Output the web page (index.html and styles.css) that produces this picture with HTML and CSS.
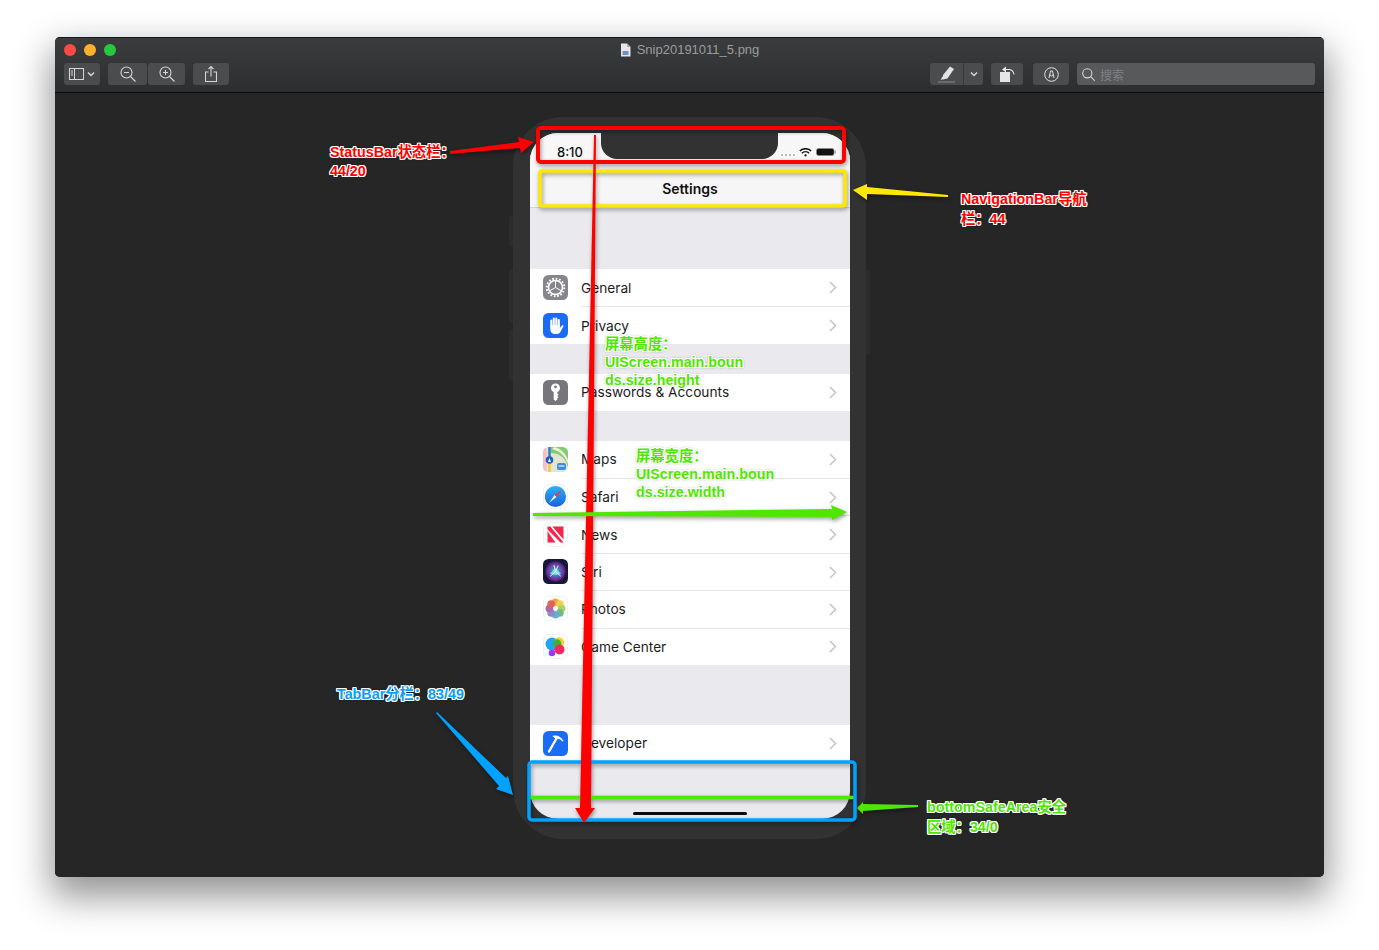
FILE: index.html
```html
<!DOCTYPE html>
<html lang="zh-CN">
<head>
  <meta charset="UTF-8">
  <title>Snip20191011_5.png</title>
  <link rel="stylesheet" href="styles.css">
</head>
<body>

<div class="window">
  <header class="header">
    <div class="titlebar">
      <div class="lights">
        <span class="light red"></span>
        <span class="light yellow"></span>
        <span class="light green"></span>
      </div>
      <div class="title">
        <svg width="11" height="14" viewBox="0 0 11 14"><path d="M1 .5h6l3.5 3.5v9.5h-9.500z" fill="#e8e8e8"/><path d="M7 .5v3.5h3.500" fill="#aaa"/><rect x="2.5" y="8" width="6" height="4" fill="#6f8fc8"/></svg>
        <span>Snip20191011_5.png</span>
      </div>
    </div>
    <div class="toolbar">
      <div class="btn btn-sidebar">
        <svg width="15" height="12" viewBox="0 0 15 12" fill="none" stroke="#d6d6d6"><rect x=".5" y=".5" width="14" height="11"/><path d="M5.5 .5v11M1.8 3h2.200M1.8 5h2.200M1.8 7h2.200"/></svg>
        <svg width="8" height="6" viewBox="0 0 8 6" fill="none" stroke="#d6d6d6" stroke-width="1.5"><path d="M1 1.5l3 3 3-3"/></svg>
      </div>
      <div class="btn-pair">
        <div class="btn btn-zoom-out">
          <svg width="16" height="16" viewBox="0 0 16 16" fill="none" stroke="#d6d6d6" stroke-width="1.1"><circle cx="6.5" cy="6.5" r="5.5"/><path d="M4 6.5h5M10.5 10.5l5 5"/></svg>
        </div>
        <div class="btn btn-zoom-in">
          <svg width="16" height="16" viewBox="0 0 16 16" fill="none" stroke="#d6d6d6" stroke-width="1.1"><circle cx="6.5" cy="6.5" r="5.5"/><path d="M4 6.5h5M6.5 4v5M10.5 10.5l5 5"/></svg>
        </div>
      </div>
      <div class="btn btn-share">
        <svg width="12" height="16" viewBox="0 0 12 16" fill="none" stroke="#d6d6d6" stroke-width="1.1"><path d="M3.5 6h-3v9.5h11v-9.500h-3M6 10.5v-10M3.5 3l2.500-2.500 2.500 2.500"/></svg>
      </div>

      <div class="btn btn-markup">
        <div class="markup-pen">
          <svg width="18" height="17" viewBox="0 0 18 17"><path d="M5 9l7-8.500 4 2.500-6.500 9.500-4.500 1z" fill="#e2e2e2"/><path d="M4.5 10.5l3 2-5 1.500z" fill="#e2e2e2"/><path d="M0 16h17" stroke="#8a8a8a" stroke-width="1"/></svg>
        </div>
        <div class="markup-more">
          <svg width="8" height="6" viewBox="0 0 8 6" fill="none" stroke="#d6d6d6" stroke-width="1.5"><path d="M1 1.5l3 3 3-3"/></svg>
        </div>
      </div>
      <div class="btn btn-rotate">
        <svg width="15" height="16" viewBox="0 0 15 16"><rect x="0" y="6" width="10" height="10" fill="#e6e6e6"/><path d="M5 3.5h3.500c3 0 5 2 5.500 5" fill="none" stroke="#e6e6e6" stroke-width="1.1"/><path d="M6 .5v6l-4-3z" fill="#e6e6e6"/></svg>
      </div>
      <div class="btn btn-annotate">
        <svg width="15" height="15" viewBox="0 0 15 15" fill="none" stroke="#e0e0e0" stroke-width="1"><circle cx="7.5" cy="7.5" r="6.8"/><path d="M5 11l1.500-7h2l1.500 7M6 7.5a1.500 1.500 0 0 0 3 0"/></svg>
      </div>
      <div class="search">
        <svg width="13" height="13" viewBox="0 0 13 13" fill="none" stroke="#d6d6d6" stroke-width="1.1"><circle cx="5.3" cy="5.3" r="4.6"/><path d="M8.7 8.7l4 4"/></svg>
        <span>搜索</span>
      </div>
    </div>
  </header>

  <main class="canvas">
    <div class="phone">
      <span class="side-btn side-a"></span>
      <span class="side-btn side-b"></span>
      <span class="side-btn side-c"></span>
      <span class="side-btn side-d"></span>

      <div class="screen">
        <div class="status">
          <div class="status-time">8:10</div>
          <div class="notch"></div>
          <div class="status-icons">
            <span class="signal"><i></i><i></i><i></i><i></i></span>
            <svg width="13" height="9" viewBox="0 0 13 9" fill="none" stroke="#111" stroke-width="1.5"><path d="M.8 3a8.200 8.200 0 0 1 11.400 0M2.900 5.200a5.200 5.200 0 0 1 7.200 0"/><circle cx="6.5" cy="7.4" r="1.1" fill="#111" stroke="none"/></svg>
            <svg width="20" height="8" viewBox="0 0 20 8"><rect x=".5" y=".5" width="17.5" height="7" rx="2" fill="#111" stroke="#888" stroke-width=".6"/><rect x="18.6" y="2.5" width="1.2" height="3" fill="#999"/></svg>
          </div>
        </div>
        <div class="navbar">Settings</div>

        <div class="group group-first">
          <div class="row">
            <svg class="app-icon" viewBox="0 0 25 25">
              <rect width="25" height="25" rx="5.5" fill="#85858a"/>
              <circle cx="12.5" cy="12.5" r="8.8" fill="none" stroke="#fff" stroke-width="2" stroke-dasharray="1.7 1.75"/>
              <circle cx="12.5" cy="12.5" r="7" fill="none" stroke="#fff" stroke-width="1.6"/>
              <path d="M12.5 12.5V6M12.5 12.5l5.600 3.200M12.5 12.5l-5.600 3.200" stroke="#fff" stroke-width="1"/>
            </svg>
            <div class="row-body"><span>General</span>
              <svg class="chevron" width="8" height="13" viewBox="0 0 8 13"><path d="M1 1l5.500 5.500-5.500 5.500"/></svg>
            </div>
          </div>
          <div class="row">
            <svg class="app-icon" viewBox="0 0 25 25">
              <rect width="25" height="25" rx="5.5" fill="#1a6cf7"/>
              <path d="M8.3 13V7.500M10.800 12V5.500M13.300 12V5.500M15.800 13V7" stroke="#fff" stroke-width="2.1" stroke-linecap="round"/>
              <path d="M7.3 12h9.600v3l2.300-3 1.500.8-3.200 6c-.8 1.500-2 2.200-3.800 2.200h-1.500c-2.800 0-4.900-2-4.900-4.800z" fill="#fff"/>
            </svg>
            <div class="row-body"><span>Privacy</span>
              <svg class="chevron" width="8" height="13" viewBox="0 0 8 13"><path d="M1 1l5.500 5.500-5.500 5.500"/></svg>
            </div>
          </div>
        </div>

        <div class="group group-keys">
          <div class="row">
            <svg class="app-icon" viewBox="0 0 25 25">
              <rect width="25" height="25" rx="5.5" fill="#77777b"/>
              <path d="M12.5 3.5a4.500 4.500 0 0 1 1.800 8.600v1.200l1.300 1.200-1.300 1.200 1.300 1.200-1.300 1.300v1.400l-1.800 1.400-1.800-1.400v-7.500a4.500 4.500 0 0 1 1.800-8.600z" fill="#fff"/>
              <circle cx="12.5" cy="6.8" r="1.4" fill="#77777b"/>
            </svg>
            <div class="row-body"><span>Passwords &amp; Accounts</span>
              <svg class="chevron" width="8" height="13" viewBox="0 0 8 13"><path d="M1 1l5.500 5.500-5.500 5.500"/></svg>
            </div>
          </div>
        </div>

        <div class="group group-apps">
          <div class="row">
            <svg class="app-icon" viewBox="0 0 25 25">
              <defs><clipPath id="maps-clip"><rect width="25" height="25" rx="5.5"/></clipPath></defs>
              <g clip-path="url(#maps-clip)">
                <rect width="25" height="25" fill="#e6e3cf"/>
                <path d="M7 0h18v20C22 10 16 6 7 6z" fill="#7fce72"/>
                <path d="M12 0c6 2 11 7 13 13v4C22 9 17 4 9 2z" fill="#f4f0d8"/>
                <rect width="3.5" height="25" fill="#f7bcc5"/>
                <path d="M6.5 0v25" stroke="#f5c93c" stroke-width="2.5"/>
                <path d="M6.5 0v11" stroke="#2a7de1" stroke-width="2.5"/>
                <circle cx="6.5" cy="13" r="3.8" fill="#1f5fc4"/>
                <path d="M6.5 11l1.500 4h-3z" fill="#fff"/>
                <rect x="14" y="16" width="9" height="7" rx="2" fill="#3f8fe0"/>
                <path d="M15.5 19h6" stroke="#fff" stroke-width="1"/>
              </g>
            </svg>
            <div class="row-body"><span>Maps</span>
              <svg class="chevron" width="8" height="13" viewBox="0 0 8 13"><path d="M1 1l5.500 5.500-5.500 5.500"/></svg>
            </div>
          </div>
          <div class="row">
            <svg class="app-icon" viewBox="0 0 25 25">
              <defs><linearGradient id="safari-blue" x1="0" y1="0" x2="0" y2="1"><stop offset="0" stop-color="#2cb2f6"/><stop offset="1" stop-color="#1d5fdc"/></linearGradient></defs>
              <rect x=".5" y=".5" width="24" height="24" rx="5.5" fill="#fff" stroke="#f1f1f3"/>
              <circle cx="12.5" cy="12.5" r="10.6" fill="url(#safari-blue)"/>
              <path d="M19 6l-7.500 5 2 2z" fill="#f0372d"/>
              <path d="M6 19l7.500-6-2-2z" fill="#f2f2f2"/>
            </svg>
            <div class="row-body"><span>Safari</span>
              <svg class="chevron" width="8" height="13" viewBox="0 0 8 13"><path d="M1 1l5.500 5.500-5.500 5.500"/></svg>
            </div>
          </div>
          <div class="row">
            <svg class="app-icon" viewBox="0 0 25 25">
              <rect x=".5" y=".5" width="24" height="24" rx="5.5" fill="#fff" stroke="#f1f1f3"/>
              <path d="M4.5 8v12.500h8.500zM9 4.500h11.500v13z" fill="#f5264c"/>
              <path d="M4.5 4.5h3l13 16h-3l-13-13z" fill="#f5264c"/>
              <path d="M7.5 4.5h1.800l11.200 13.800v1.500zM4.500 7.500v1.800l8 11.200h1.500z" fill="#fff"/>
            </svg>
            <div class="row-body"><span>News</span>
              <svg class="chevron" width="8" height="13" viewBox="0 0 8 13"><path d="M1 1l5.500 5.500-5.500 5.500"/></svg>
            </div>
          </div>
          <div class="row">
            <svg class="app-icon" viewBox="0 0 25 25">
              <defs>
                <radialGradient id="siri-orb"><stop offset="0" stop-color="#8feaf0"/><stop offset=".4" stop-color="#3f7fc0"/><stop offset=".75" stop-color="#7a2f9c"/><stop offset="1" stop-color="#25204e"/></radialGradient>
              </defs>
              <rect width="25" height="25" rx="5.5" fill="#15163a"/>
              <circle cx="12.5" cy="12.5" r="10.5" fill="url(#siri-orb)"/>
              <path d="M7 14.500c2-1.500 3-4 5.500-4s3.500 2.500 5.500 4c-2 .5-3 1.500-5.500 1.500s-3.500-1-5.500-1.500z" fill="#7fe6e8" opacity=".8"/>
              <path d="M12.5 12.5l-5 4.500M12.5 12.5l5 4.500M12.5 12.5l-1.500-6M12.5 12.5l2.500-5.500" stroke="#eef8ff" stroke-width="1" stroke-linecap="round"/>
            </svg>
            <div class="row-body"><span>Siri</span>
              <svg class="chevron" width="8" height="13" viewBox="0 0 8 13"><path d="M1 1l5.500 5.500-5.500 5.500"/></svg>
            </div>
          </div>
          <div class="row">
            <svg class="app-icon" viewBox="0 0 25 25">
              <rect x=".5" y=".5" width="24" height="24" rx="5.5" fill="#fff" stroke="#f1f1f3"/>
              <g opacity=".92">
                <circle cx="12.5" cy="6.3" r="3.8" fill="#f09a37"/>
                <circle cx="16.9" cy="8.1" r="3.8" fill="#f3cf3c"/>
                <circle cx="18.7" cy="12.5" r="3.8" fill="#a9cf54"/>
                <circle cx="16.9" cy="16.9" r="3.8" fill="#62b67a"/>
                <circle cx="12.5" cy="18.7" r="3.8" fill="#5aa7d6"/>
                <circle cx="8.1" cy="16.9" r="3.8" fill="#8a7fc0"/>
                <circle cx="6.3" cy="12.5" r="3.8" fill="#a65d9f"/>
                <circle cx="8.1" cy="8.1" r="3.8" fill="#e0534d"/>
              </g>
              <circle cx="12.5" cy="12.5" r="1" fill="#fff"/>
            </svg>
            <div class="row-body"><span>Photos</span>
              <svg class="chevron" width="8" height="13" viewBox="0 0 8 13"><path d="M1 1l5.500 5.500-5.500 5.500"/></svg>
            </div>
          </div>
          <div class="row">
            <svg class="app-icon" viewBox="0 0 25 25">
              <rect x=".5" y=".5" width="24" height="24" rx="5.5" fill="#fff" stroke="#f1f1f3"/>
              <circle cx="9" cy="10" r="6.5" fill="#1fa5f7"/>
              <circle cx="16" cy="8.5" r="5.2" fill="#f7d32e"/>
              <circle cx="14" cy="9.5" r="4.2" fill="#3fae3a"/>
              <circle cx="16.5" cy="15.5" r="5" fill="#f5285f"/>
              <circle cx="9" cy="19" r="3.3" fill="#9b3bf0"/>
            </svg>
            <div class="row-body"><span>Game Center</span>
              <svg class="chevron" width="8" height="13" viewBox="0 0 8 13"><path d="M1 1l5.500 5.500-5.500 5.500"/></svg>
            </div>
          </div>
        </div>

        <div class="group group-dev">
          <div class="row">
            <svg class="app-icon" viewBox="0 0 25 25">
              <rect width="25" height="25" rx="5.5" fill="#1a6cf7"/>
              <path d="M6 20.500l8-14" stroke="#fff" stroke-width="2.4" stroke-linecap="round"/>
              <path d="M9.5 5c4.500-1.300 8.500.5 11 5l-1 .5c-2.500-2.500-4.500-3-6.700-2.500z" fill="#fff"/>
            </svg>
            <div class="row-body"><span>Developer</span>
              <svg class="chevron" width="8" height="13" viewBox="0 0 8 13"><path d="M1 1l5.500 5.500-5.500 5.500"/></svg>
            </div>
          </div>
        </div>

        <div class="home-area"><span class="home-bar"></span></div>
      </div>
    </div>
  </main>
</div>

<!-- annotations drawn over the screenshot -->
<svg class="marks" width="1379" height="950" viewBox="0 0 1379 950">
  <g fill="none">
    <rect x="540" y="171" width="305" height="35" rx="2" stroke="#ffe800" stroke-width="3.5"/>
    <rect x="538" y="128" width="306" height="34" rx="3" stroke="#ff0000" stroke-width="4"/>
    <path d="M530 797.5H854" stroke="#4fe600" stroke-width="3.5"/>
    <rect x="529" y="762" width="326" height="58" rx="3" stroke="#00a2ff" stroke-width="3.5"/>
  </g>
  <polygon fill="#ff0000" points="594,135 596,135 591,808 595,808 584,823 575,808 580,808"/>
  <polygon fill="#4fe600" points="533,513 832,509 831,505 847,512 832,520 832,517 533,516"/>
  <polygon fill="#ff0000" points="450,151 519,142 518,137 534,142 521,153 520,148 450,154"/>
  <polygon fill="#ffe800" points="948,195 867,187 867,184 853,190 867,200 867,194 948,197"/>
  <polygon fill="#00a2ff" points="437,712 506,778 508,776 513,795 496,789 499,786 436,713"/>
  <polygon fill="#4fe600" points="918,805 863,804 863,802 857,808 863,814 863,811 918,807"/>
</svg>

<div class="note note-red note-status">StatusBar状态栏：<br>44/20</div>
<div class="note note-red note-nav">NavigationBar导航<br>栏：44</div>
<div class="note note-blue note-tab">TabBar分栏：83/49</div>
<div class="note note-green note-safe">bottomSafeArea安全<br>区域：34/0</div>
<div class="note note-green note-height">屏幕高度：<br>UIScreen.main.boun<br>ds.size.height</div>
<div class="note note-green note-width">屏幕宽度：<br>UIScreen.main.boun<br>ds.size.width</div>

</body>
</html>
```

FILE: styles.css
```css
html, body {
  margin: 0;
  height: 950px;
  overflow: hidden;
}

body {
  position: relative;
  background: #fff;
  font-family: "Liberation Sans", "Noto Sans CJK SC", sans-serif;
  padding: 37px 55px 0;
  box-sizing: border-box;
}

/* preview window */
.window {
  height: 840px;
  display: flex;
  flex-direction: column;
  border-radius: 5px;
  overflow: hidden;
  background: #262626;
  box-shadow: 0 16px 36px 4px rgba(0, 0, 0, 0.42);
}

.header {
  flex: none;
  height: 56px;
  box-sizing: border-box;
  background: linear-gradient(#3b3c3e, #2d2e30);
  border-top: 1px solid #17181a;
  border-bottom: 1px solid #0c0c0c;
}

.titlebar {
  height: 25px;
  box-sizing: border-box;
  display: grid;
  grid-template-columns: 1fr auto 1fr;
  align-items: center;
  padding: 0 9px 2px;
}

.lights {
  display: flex;
  gap: 8px;
}

.light {
  width: 12px;
  height: 12px;
  border-radius: 50%;
}

.light.red { background: #fc4a46; }
.light.yellow { background: #fdb22a; }
.light.green { background: #28c83e; }

.title {
  grid-column: 2;
  display: flex;
  align-items: center;
  gap: 6px;
  color: #9c9c9c;
  font-size: 13px;
}

.toolbar {
  height: 22px;
  display: flex;
  align-items: stretch;
  gap: 8px;
  padding: 0 9px;
}

.btn {
  display: flex;
  align-items: center;
  justify-content: center;
  background: #4b4c4e;
  border-radius: 3px;
}

.btn-sidebar { width: 36px; gap: 3px; }
.btn-pair { display: flex; gap: 1px; }
.btn-zoom-out { width: 39px; }
.btn-zoom-in { width: 37px; }
.btn-share { width: 36px; }

.btn-markup {
  width: 53px;
  margin-left: auto;
}

.markup-pen {
  width: 33px;
  height: 100%;
  display: flex;
  align-items: center;
  justify-content: center;
  border-right: 1px solid #38393b;
}

.markup-more {
  flex: 1;
  display: flex;
  justify-content: center;
}

.btn-rotate { width: 32px; }
.btn-annotate { width: 36px; margin-left: 2px; }

.search {
  width: 238px;
  box-sizing: border-box;
  display: flex;
  align-items: center;
  gap: 5px;
  padding-left: 5px;
  background: #58595b;
  border-radius: 3px;
  color: #808183;
  font-size: 12px;
}

/* phone */
.canvas {
  flex: 1;
  display: flex;
  justify-content: center;
  align-items: flex-start;
  padding-top: 24px;
  background: #262626;
}

.phone {
  position: relative;
  width: 353px;
  height: 722px;
  box-sizing: border-box;
  padding: 16px 16px 20px 17px;
  background: #323232;
  border-radius: 50px;
}

.side-btn {
  position: absolute;
  width: 4px;
  background: #2c2c2c;
}

.side-a { left: -4px; top: 99px; height: 30px; border-radius: 2px 0 0 2px; }
.side-b { left: -4px; top: 153px; height: 52px; border-radius: 2px 0 0 2px; }
.side-c { left: -4px; top: 213px; height: 51px; border-radius: 2px 0 0 2px; }
.side-d { right: -4px; top: 153px; height: 85px; border-radius: 0 2px 2px 0; }

.screen {
  width: 320px;
  height: 686px;
  display: flex;
  flex-direction: column;
  background: #e9e9ee;
  border-radius: 28px;
  overflow: hidden;
  color: #111;
}

.status {
  flex: none;
  height: 37px;
  display: flex;
  background: #f7f7f7;
}

.status-time {
  width: 71px;
  box-sizing: border-box;
  padding: 11px 0 0 27px;
  font-size: 13px;
  font-weight: 500;
  font-family: Inter, "Liberation Sans", sans-serif;
}

.notch {
  width: 177px;
  height: 26px;
  background: #323232;
  border-radius: 0 0 16px 16px;
}

.status-icons {
  flex: 1;
  display: flex;
  align-items: center;
  gap: 4px;
  padding: 1px 0 0 3px;
  box-sizing: border-box;
}

.signal {
  display: flex;
  gap: 2px;
  align-self: flex-end;
  margin-bottom: 14px;
}

.signal i {
  width: 2px;
  height: 2px;
  border-radius: 50%;
  background: #a8a8a8;
}

.navbar {
  flex: none;
  height: 38px;
  box-sizing: border-box;
  display: flex;
  align-items: center;
  justify-content: center;
  background: #f6f6f7;
  border-bottom: 1px solid #d4d4d6;
  font-family: Inter, "Liberation Sans", sans-serif;
  font-size: 14px;
  font-weight: 600;
}

.group { background: #fff; flex: none; }
.group-first { margin-top: 61px; }
.group-keys { margin-top: 30px; }
.group-apps { margin-top: 29.5px; }
.group-dev { margin-top: 59.5px; }

.row {
  height: 37.4px;
  display: flex;
  align-items: center;
  gap: 13px;
  padding-left: 13px;
}

.app-icon {
  flex: none;
  width: 25px;
  height: 25px;
}

.row-body {
  flex: 1;
  height: 100%;
  box-sizing: border-box;
  display: flex;
  align-items: center;
  justify-content: space-between;
  padding-right: 13px;
  font-family: Inter, "Liberation Sans", sans-serif;
  font-size: 13.7px;
  color: #1c1c1e;
}

.row + .row .row-body {
  border-top: 1px solid #e6e6e9;
}

.chevron {
  fill: none;
  stroke: #c4c4c8;
  stroke-width: 1.5;
}

.home-area {
  flex: 1;
  display: flex;
  align-items: flex-end;
  justify-content: center;
  padding-bottom: 4px;
}

.home-bar {
  width: 114px;
  height: 3px;
  border-radius: 2px;
  background: #0a0a0a;
}

/* annotations */
.marks {
  position: absolute;
  left: 0;
  top: 0;
  filter: drop-shadow(1px 2px 2px rgba(0, 0, 0, 0.4));
}

.note {
  position: absolute;
  white-space: nowrap;
  font-size: 14.3px;
  font-weight: 700;
  line-height: 18px;
  text-shadow: -1px 0 #fff, 1px 0 #fff, 0 -1px #fff, 0 1px #fff,
    -1px -1px #fff, 1px -1px #fff, -1px 1px #fff, 1px 1px #fff,
    0 0 3px rgba(0, 0, 0, 0.7);
}

.note-red { color: #ff0000; }
.note-blue { color: #0a9dfb; }
.note-green { color: #4fe600; }

.note-status { left: 330px; top: 143px; line-height: 19px; }
.note-nav { left: 961px; top: 189px; line-height: 20px; }
.note-tab { left: 337px; top: 685px; }
.note-safe { left: 927px; top: 797px; line-height: 20px; }
.note-height { left: 605px; top: 335px; }
.note-width { left: 636px; top: 447px; }
```
